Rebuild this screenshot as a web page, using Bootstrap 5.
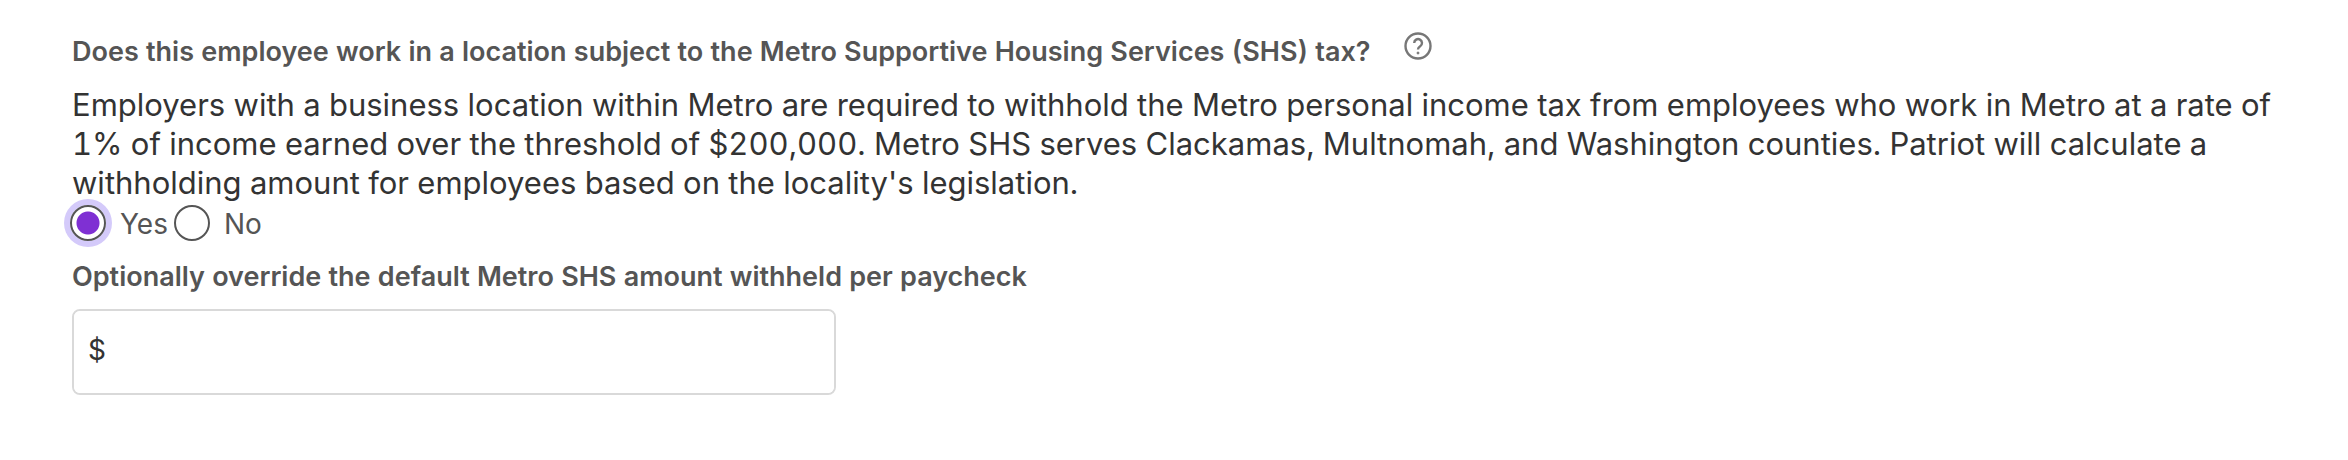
<!DOCTYPE html>
<html lang="en"><head><meta charset="utf-8"><meta name="viewport" content="width=device-width, initial-scale=1"><title>Metro SHS tax</title>
<link href="https://cdn.jsdelivr.net/npm/bootstrap@5.3.0/dist/css/bootstrap.min.css" rel="stylesheet">
<style>
body{font-family:Inter,sans-serif;color:#333;background:#fff;font-feature-settings:"tnum"}
.tax-form{padding:32px 48px 64px 72px}
.question{font-size:27px;line-height:40px;font-weight:600;color:#555}
.help-btn{width:28px;height:28px;color:#777;line-height:0;margin-left:34px}
.intro{font-size:31px;line-height:39px;margin:13px 0 3px}
.choice{font-size:28px;line-height:38px;color:#555;margin-left:-2px}
.choice .form-check-input{width:36px;height:36px;margin:0;float:none;border:2px solid #555}
.choice .form-check-input:checked{background:radial-gradient(circle,#7f30d3 11px,#fff 12px)}
.choice .form-check-input:focus{box-shadow:0 0 0 6px #d4cafa}
.choice label{padding:0 6px 0 14px}
.override{margin-top:14px}
.money{width:764px;max-width:100%;border:2px solid #d9d9d9;border-radius:8px;margin-top:12px}
.money .form-control,.money .input-group-text{font-size:28px;line-height:38px;padding:20px 14px 24px;border:0;background:#fff;color:#333}
</style></head><body>
<main><form class="tax-form">
<fieldset><div class="d-flex"><legend class="question w-auto m-0">Does this employee work in a location subject to the Metro Supportive Housing Services (SHS) tax?</legend>
<button type="button" class="help-btn btn p-0 border-0" aria-label="Help"><svg width="28" height="28" viewBox="0 0 28 28" fill="none" stroke="currentColor" stroke-width="2.4"><circle cx="14" cy="14" r="12.500"/><path d="M10.200 11a3.900 3.900 0 1 1 6 3.300c-1.500 1-2.200 1.700-2.200 3.200"/><circle cx="14" cy="21" r="1" fill="currentColor" stroke-width="1"/></svg></button></div>
<p class="intro">Employers with a business location within Metro are required to withhold the Metro personal income tax from employees who work in Metro at a rate of 1% of income earned over the threshold of $200,000. Metro SHS serves Clackamas, Multnomah, and Washington counties. Patriot will calculate a withholding amount for employees based on the locality's legislation.</p>
<div class="choice d-flex"><input class="form-check-input" type="radio" name="shs" id="shs-yes" checked autofocus><label for="shs-yes">Yes</label><input class="form-check-input" type="radio" name="shs" id="shs-no"><label for="shs-no">No</label></div></fieldset>
<label for="amt" class="question override d-block">Optionally override the default Metro SHS amount withheld per paycheck</label>
<div class="input-group money"><span class="input-group-text">$</span><input class="form-control" id="amt" type="text"></div>
</form></main>
<script src="https://cdn.jsdelivr.net/npm/bootstrap@5.3.0/dist/js/bootstrap.bundle.min.js"></script>
</body></html>
